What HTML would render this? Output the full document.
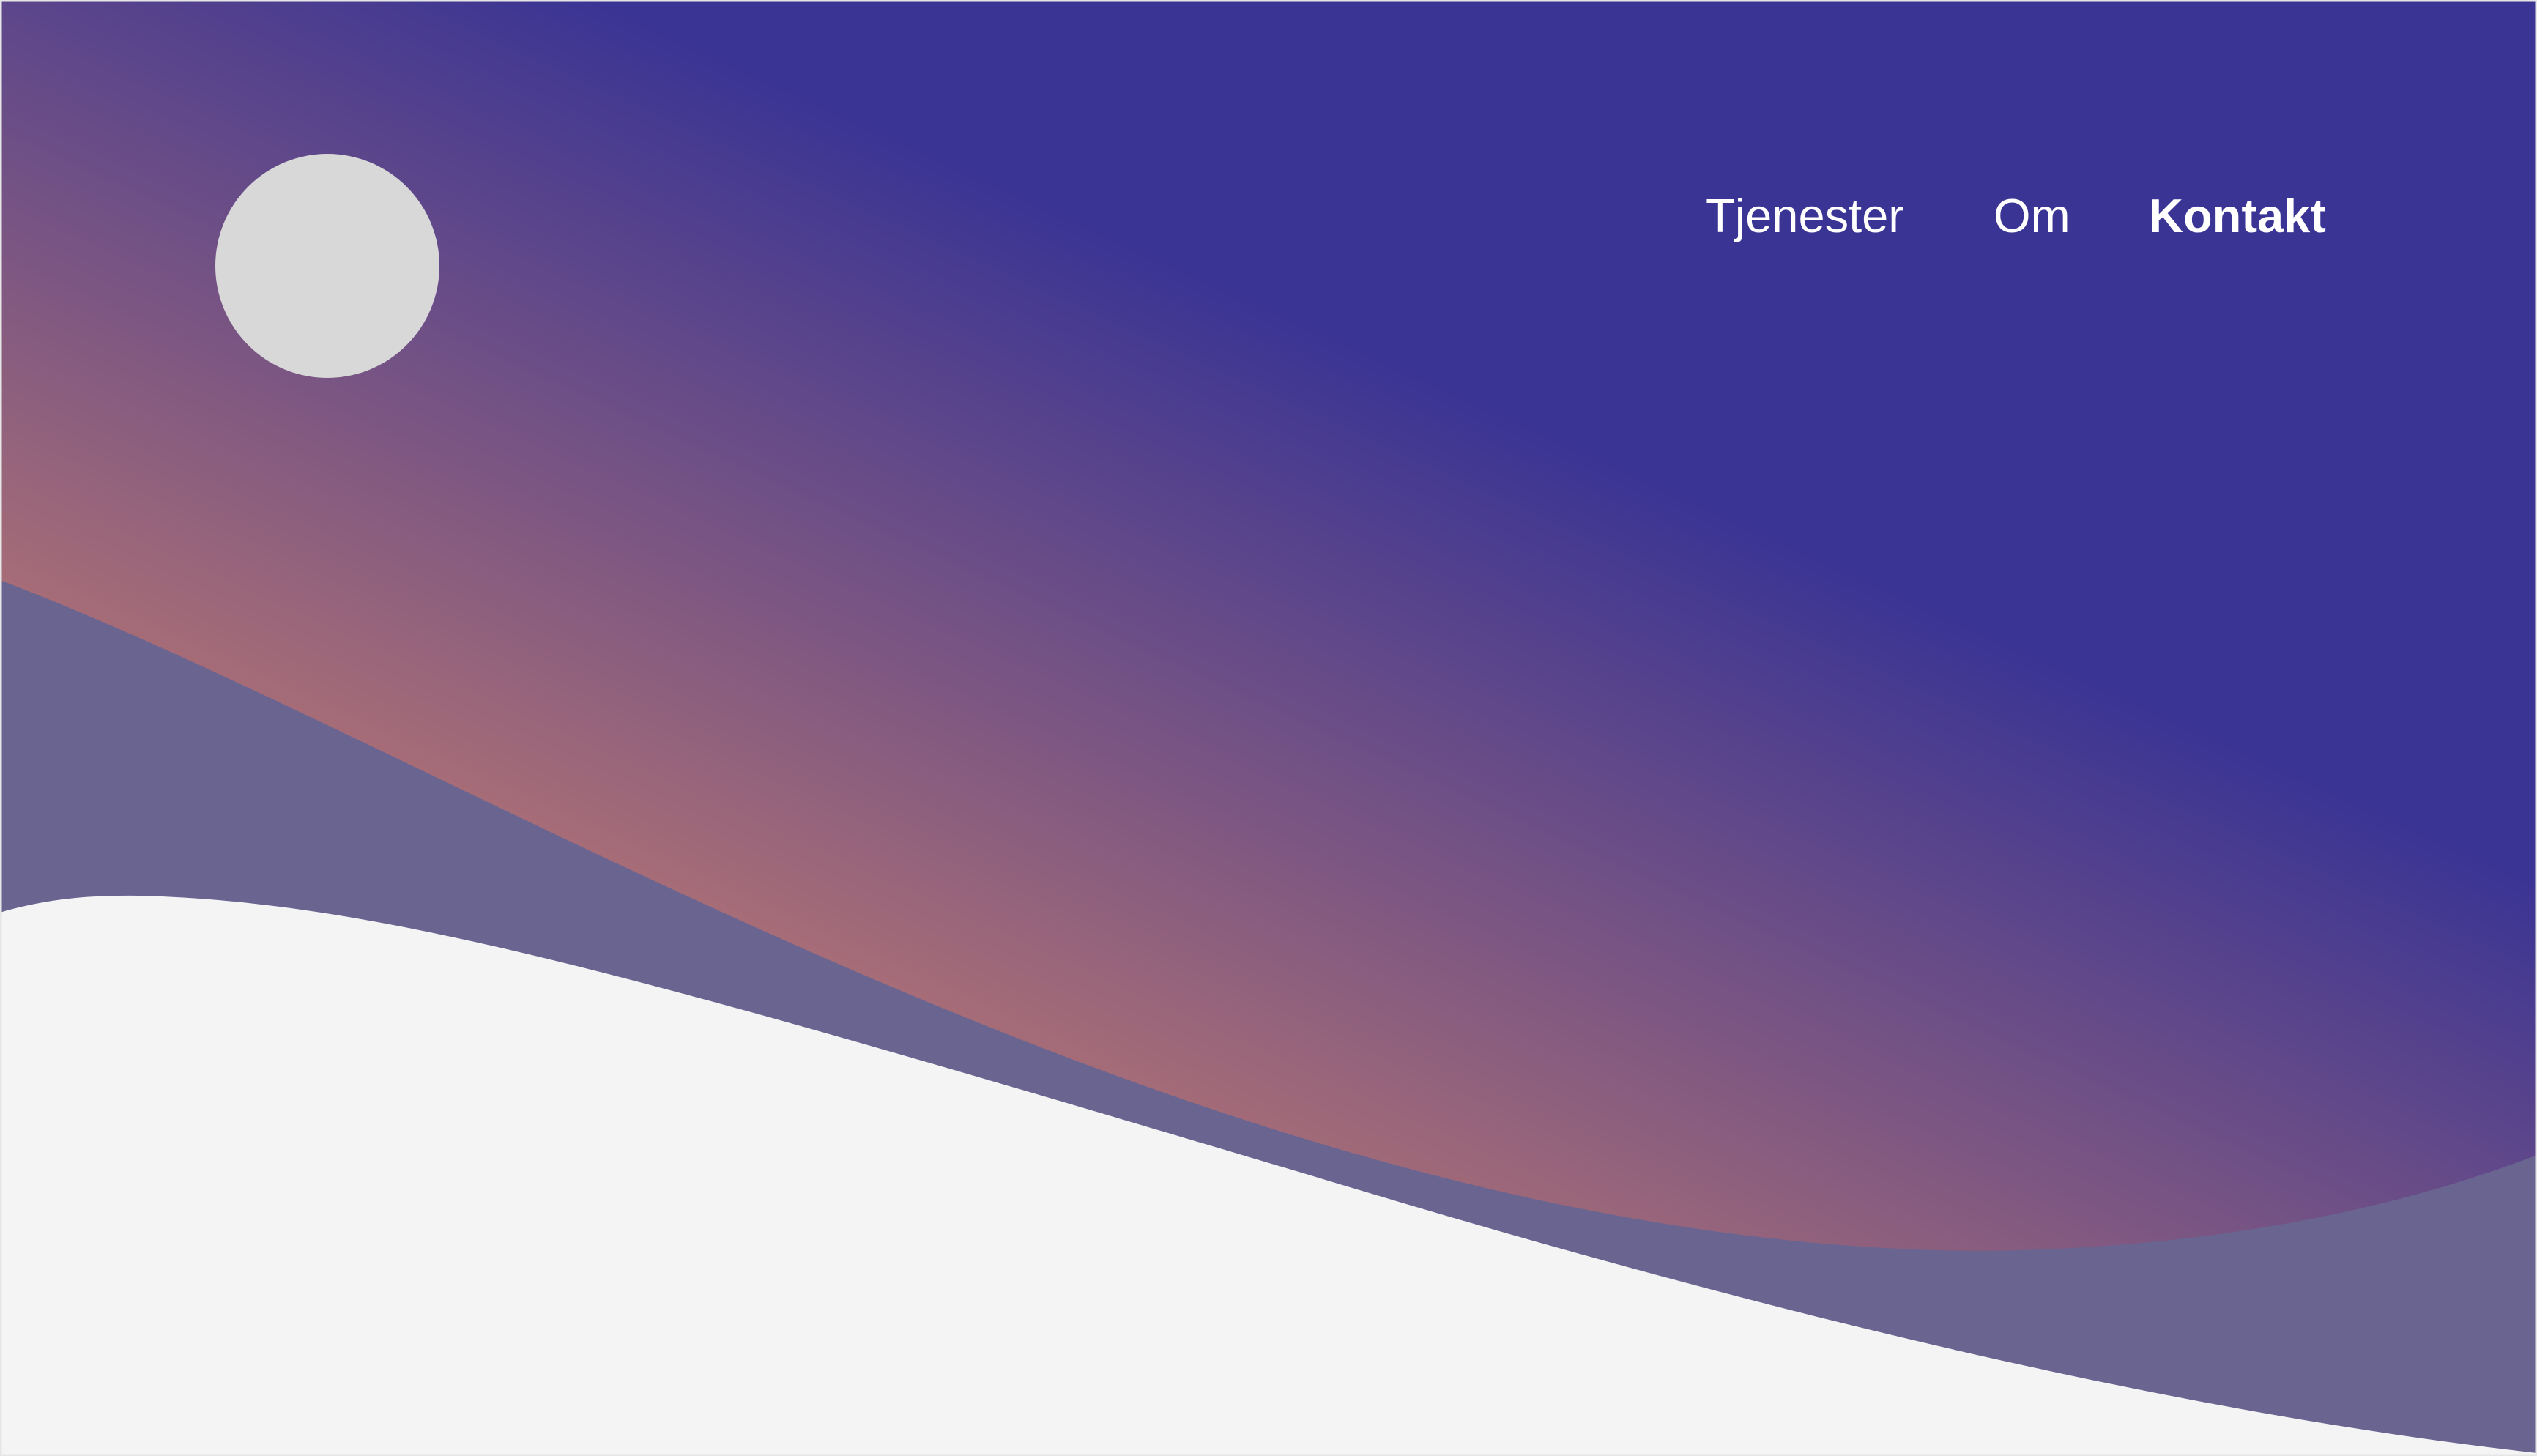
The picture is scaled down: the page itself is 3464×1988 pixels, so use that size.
<!DOCTYPE html>
<html><head><meta charset="utf-8"><style>
html,body{margin:0;padding:0;width:3464px;height:1988px;overflow:hidden;background:#f4f4f4}
svg{position:absolute;left:0;top:0}
.nav{position:absolute;top:257px;font-family:"Liberation Sans",sans-serif;font-size:65px;color:#fff;white-space:nowrap}
</style></head><body>
<svg width="3464" height="1988" viewBox="0 0 3464 1988">
<defs><linearGradient id="g" gradientUnits="userSpaceOnUse" x1="1200" y1="1500" x2="1700" y2="400">
<stop offset="0" stop-color="#b57473"/><stop offset="1" stop-color="#3a3494"/></linearGradient></defs>
<rect width="3464" height="1988" fill="url(#g)"/>
<path d="M0,792 C650,1040 1650,1700 2700,1708 C3050,1705 3300,1640 3464,1577 L3464,1988 L0,1988Z" fill="#6a6491"/>
<path d="M0,1246 C60,1228 120,1222 188,1223 C520,1230 900,1340 1770,1599 C2300,1760 2900,1920 3464,1984 L3464,1988 L0,1988Z" fill="#f4f4f4"/>
<circle cx="447" cy="363" r="153" fill="#d8d8d8"/>
<rect x="1" y="1" width="3462" height="1986" fill="none" stroke="#e6e6e6" stroke-width="3"/>
</svg>
<div class="nav" style="left:2329px">Tjenester</div>
<div class="nav" style="left:2722px">Om</div>
<div class="nav" style="left:2934px;font-weight:bold">Kontakt</div>
</body></html>
